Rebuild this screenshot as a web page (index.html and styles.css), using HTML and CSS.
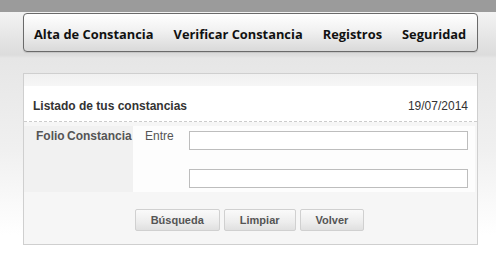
FILE: index.html
```html
<!DOCTYPE html>
<html lang="es">
<head>
<meta charset="utf-8">
<title>Listado de constancias</title>
<link rel="stylesheet" href="styles.css">
</head>
<body>
<div class="topbar"></div>
<div class="page">
  <nav class="menu">
    <a class="menu-item" href="#">Alta de Constancia</a>
    <a class="menu-item" href="#">Verificar Constancia</a>
    <a class="menu-item" href="#">Registros</a>
    <a class="menu-item" href="#">Seguridad</a>
  </nav>
  <section class="panel">
    <div class="panel-strip"></div>
    <header class="panel-head">
      <span class="panel-title">Listado de tus constancias</span>
      <span class="panel-date">19/07/2014</span>
    </header>
    <div class="panel-body">
      <div class="filter">
        <div class="filter-label">Folio Constancia</div>
        <div class="filter-fields">
          <span class="field-word">Entre</span>
          <input class="field-input" type="text">
          <span></span>
          <input class="field-input" type="text">
        </div>
      </div>
      <div class="actions">
        <button class="btn" type="button">Búsqueda</button>
        <button class="btn" type="button">Limpiar</button>
        <button class="btn" type="button">Volver</button>
      </div>
    </div>
  </section>
</div>
</body>
</html>
```

FILE: styles.css
```css
html, body {
  margin: 0;
  padding: 0;
}
body {
  width: 496px;
  height: 266px;
  overflow: hidden;
  font-family: "Liberation Sans", Arial, sans-serif;
  background:
    linear-gradient(to bottom, #9b9b9b 0, #9b9b9b 12px, #f3f3f3 12px, #dcdcdc 55px, #e6e6e6 58px, #f0f0f0 150px, #ffffff 235px, #ffffff 100%);
}
.topbar {
  height: 12px;
}
.page {
  padding: 1px 18px 0 23px;
}
.menu {
  height: 37px;
  display: flex;
  align-items: center;
  gap: 20px;
  padding-left: 10px;
  border: 1px solid #6a6a6a;
  border-radius: 4px;
  background: linear-gradient(to bottom, #ffffff 0%, #f1f1f1 45%, #d9d9d9 100%);
  box-shadow: 0 1px 1px rgba(0,0,0,0.12);
}
.menu-item {
  font-family: "Open Sans", "Noto Sans", sans-serif;
  font-weight: 700;
  font-size: 12.85px;
  color: #111;
  text-decoration: none;
  white-space: nowrap;
  flex-shrink: 0;
  padding-top: 2px;
}
.panel {
  margin-top: 21px;
  height: 170px;
  border: 1px solid #cfcfcf;
  background: #f6f6f6;
  display: flex;
  flex-direction: column;
}
.panel-strip {
  height: 12px;
  background: linear-gradient(to bottom, #f0f0f0, #f6f6f6);
}
.panel-head {
  height: 36px;
  box-sizing: border-box;
  padding: 13px 9px 0 9px;
  background: #ffffff;
  display: flex;
  justify-content: space-between;
  align-items: flex-start;
  border-bottom: 1px dashed #cccccc;
  font-size: 12px;
  line-height: 14px;
  color: #333;
}
.panel-title {
  font-weight: 700;
}
.panel-body {
  flex: 1;
  padding: 4px 2px 0 0;
  display: flex;
  flex-direction: column;
}
.filter {
  display: flex;
  height: 66px;
}
.filter-label {
  width: 109px;
  box-sizing: border-box;
  padding: 3px 0 0 12px;
  background: #f1f1f1;
  font-size: 12px;
  line-height: 14px;
  font-weight: 700;
  color: #555;
  word-spacing: -1px;
}
.filter-fields {
  flex: 1;
  background: #fdfdfd;
  padding: 5px 7px 0 12px;
  display: grid;
  grid-template-columns: 44px 1fr;
  row-gap: 19px;
  align-content: start;
  font-size: 12px;
  line-height: 14px;
  color: #555;
}
.field-word {
  margin-top: -2px;
}
.field-input {
  box-sizing: border-box;
  height: 19px;
  width: 100%;
  margin: 0;
  border: 1px solid #bdbdbd;
  background: #ffffff;
  padding: 0 3px;
}
.actions {
  margin-top: 17px;
  display: flex;
  justify-content: center;
  gap: 4px;
}
.btn {
  height: 22px;
  padding: 0 15px;
  border: 1px solid #d0d0d0;
  border-radius: 2px;
  background: linear-gradient(to bottom, #fafafa 0%, #ededed 60%, #e0e0e0 100%);
  font-family: "Liberation Sans", Arial, sans-serif;
  font-size: 11px;
  font-weight: 700;
  color: #555;
  cursor: pointer;
}
```
